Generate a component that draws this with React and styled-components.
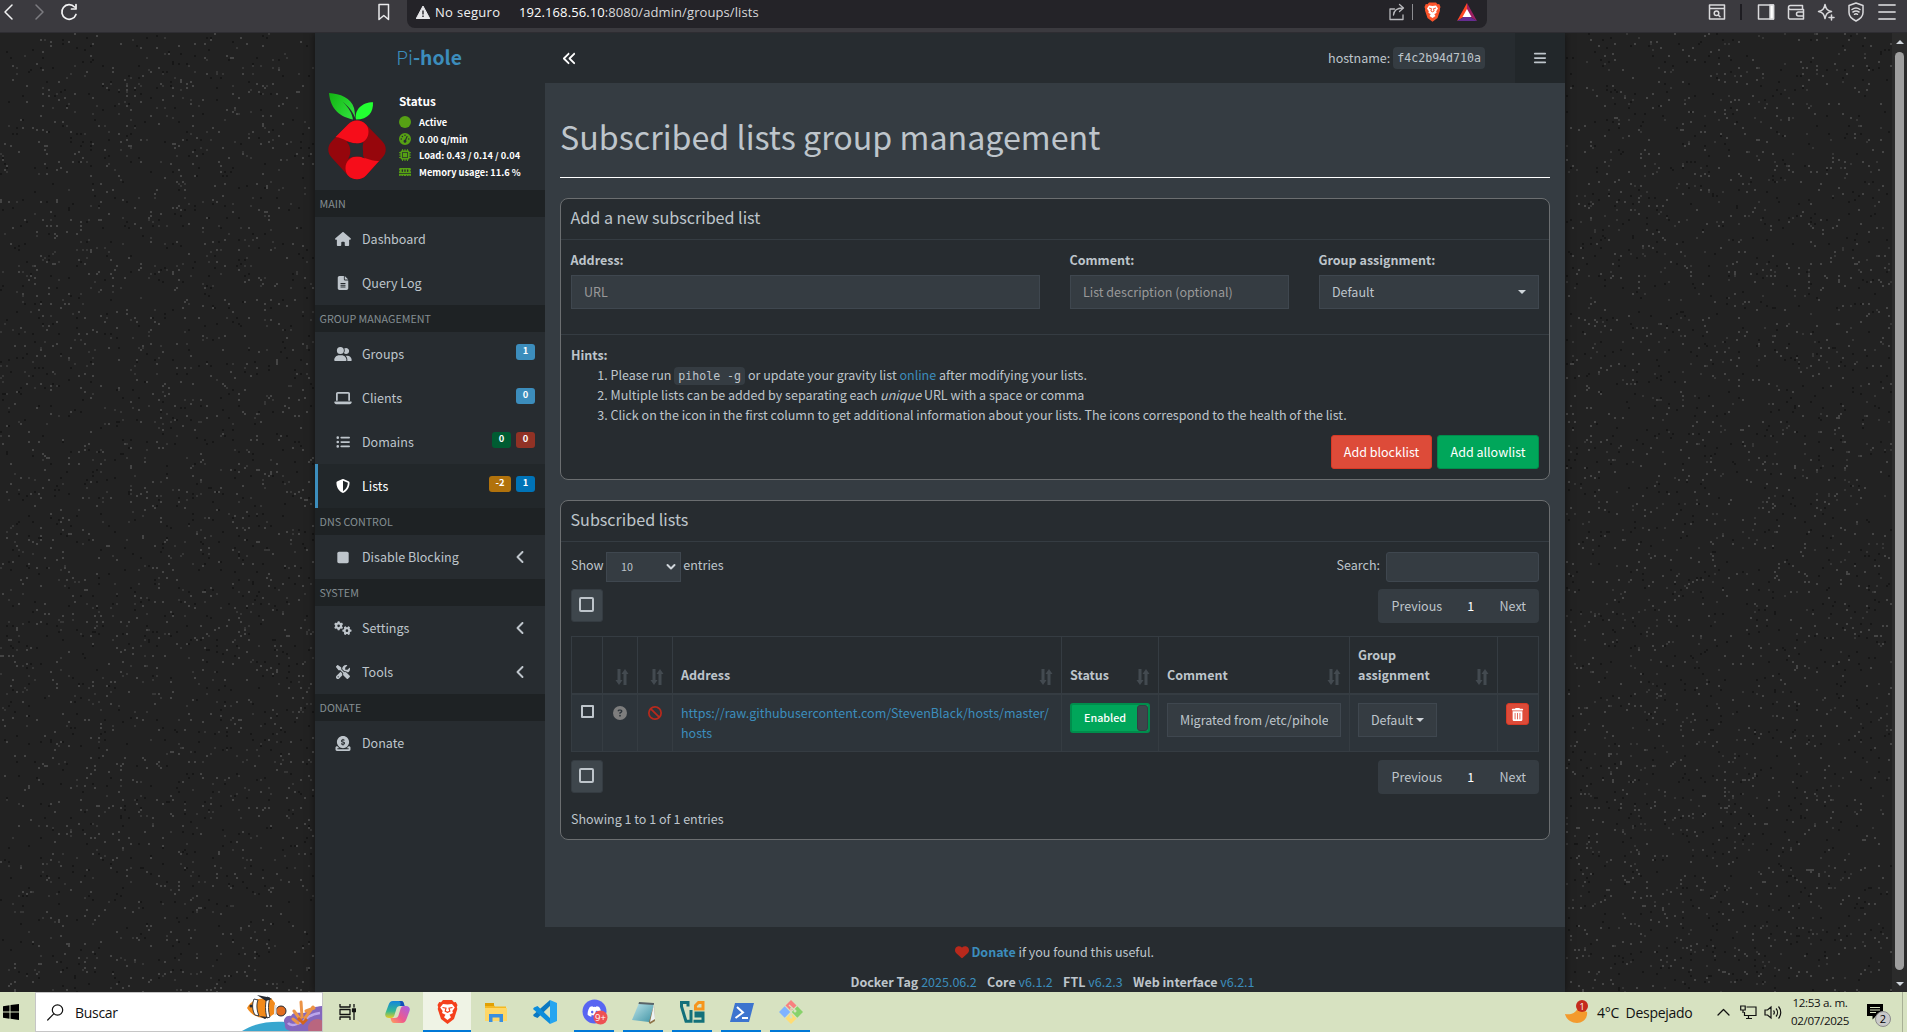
import React from 'react';
import styled, { createGlobalStyle } from 'styled-components';
import {
  FaHouse, FaFileLines, FaUserGroup, FaLaptop, FaListUl, FaShieldHalved, FaSquare, FaGears,
  FaScrewdriverWrench, FaCircleDollarToSlot, FaGaugeHigh, FaMicrochip, FaMemory, FaCircle,
  FaAnglesLeft, FaBars, FaAngleLeft, FaHeart, FaCircleQuestion, FaBan, FaTrashCan, FaDiscord,
} from 'react-icons/fa6';

const K = 0.895;
const fs = (n) => `${(n * K).toFixed(2)}px`;
const UI = '"Noto Sans CJK SC", "Open Sans", sans-serif';
const WIN = '"Open Sans", "Noto Sans", sans-serif';
const MONO = '"DejaVu Sans Mono", monospace';

const Global = createGlobalStyle`
  * { box-sizing: border-box; }
  html, body { margin: 0; padding: 0; background: #222; overflow: hidden; }
  input, select, button { font-family: inherit; outline: none; }
  svg { display: block; flex: none; }
`;

const Screen = styled.div`
  width: 1907px;
  height: 1032px;
  display: flex;
  flex-direction: column;
  overflow: hidden;
`;

/* ---------- browser bar ---------- */
const Chrome = styled.div`
  height: 33px;
  flex: none;
  display: flex;
  background: #3b3a3f;
  border-bottom: 1px solid #2e2d32;
  color: #e4e4e6;
`;
const ChromeGroup = styled.div`
  display: flex;
  align-items: center;
  height: 24px;
  gap: ${(p) => p.$gap || 0}px;
  padding-left: ${(p) => p.$pl || 0}px;
  width: ${(p) => (p.$w ? `${p.$w}px` : 'auto')};
`;
const UrlBar = styled.div`
  width: 1080px;
  height: 28px;
  background: #242328;
  border-radius: 0 0 8px 8px;
  display: flex;
  align-items: center;
  padding: 0 10px 4px 9px;
  font: 13px/20px ${WIN};
  color: #d8d8da;
`;
const Insecure = styled.span`
  width: 84px;
  margin-left: 5px;
  padding-bottom: 1px;
  letter-spacing: 0.3px;
  white-space: nowrap;
  color: #f1f1f2;
`;
const UrlText = styled.span`
  flex: 1;
  padding-bottom: 1px;
  letter-spacing: 0.09px;
  b { font-weight: 400; color: #fff; }
`;
const Bar = styled.i`
  width: ${(p) => p.$w || 1}px;
  height: 16px;
  margin: 0 ${(p) => p.$m || 0}px;
  background: ${(p) => p.$c};
`;

/* ---------- page ---------- */
const Page = styled.div`
  flex: none;
  height: 959px;
  position: relative;
  display: flex;
  background: #222;
  overflow: hidden;
  font: ${fs(14)}/20px ${UI};
  color: #bec5cb;
`;
const Speckle = styled.svg`
  position: absolute;
  left: 0;
  top: 0;
`;
const Wrapper = styled.div`
  width: 1250px;
  margin-left: 315px;
  position: relative;
  display: flex;
  background: #272c30;
  box-shadow: 0 0 8px rgba(0, 0, 0, 0.5);
`;
const Scroll = styled.div`
  position: relative;
  margin-left: auto;
  width: 15px;
  background: #2b2b2b;
  display: flex;
  flex-direction: column;
  align-items: center;
  padding: 7px 0 6px;
  justify-content: space-between;
`;
const Thumb = styled.div`
  width: 9px;
  height: 918px;
  margin-bottom: 4px;
  border-radius: 5px;
  background: #9f9f9f;
`;

const Side = styled.aside`
  width: 230px;
  flex: none;
  background: #272c30;
`;
const Brand = styled.div`
  height: 50px;
  text-align: center;
  font-size: ${fs(21.6)};
  line-height: 49px;
  padding-right: 2px;
  color: #3c8dbc;
  font-weight: 300;
  b { font-weight: 700; }
`;
const UserPanel = styled.div`
  height: 107px;
  display: flex;
  padding: 10px 0 0 13px;
`;
const Stats = styled.div`
  padding-left: 12px;
  color: #fff;
`;
const StatTitle = styled.div`
  font-weight: 700;
  font-size: ${fs(13.2)};
  line-height: 15px;
  margin-bottom: 6px;
`;
const Stat = styled.div`
  height: 16.5px;
  display: flex;
  align-items: center;
  gap: 8px;
  font-size: ${fs(10.35)};
  font-weight: 600;
  white-space: nowrap;
  svg { width: 12px; height: 12px; color: #56a014; }
`;
const Section = styled.div`
  height: 27px;
  padding-left: 4.5px;
  background: #1e2224;
  color: #848e92;
  font-size: ${fs(12)};
  line-height: 27.5px;
`;
const Item = styled.div`
  height: 44px;
  display: flex;
  align-items: center;
  padding: 0 10px 0 ${(p) => (p.$active ? 14.5 : 17.5)}px;
  border-left: ${(p) => (p.$active ? '3px solid #3c8dbc' : '0')};
  background: ${(p) => (p.$active ? '#22272a' : 'transparent')};
  color: ${(p) => (p.$active ? '#fff' : '#bec5cb')};
`;
const ItemIcon = styled.span`
  width: 20px;
  margin-right: 9.5px;
  display: flex;
  justify-content: center;
  svg { height: ${(p) => p.$s || 14}px; width: 20px; }
`;
const ItemLabel = styled.span`
  flex: 1;
  padding-bottom: 1px;
`;
const Badges = styled.span`
  display: flex;
  gap: 5px;
  margin-top: -4px;
`;
const Badge = styled.span`
  height: 16px;
  min-width: 19px;
  padding: 0 6.4px;
  border-radius: 3px;
  background: ${(p) => p.$c};
  color: #fff;
  font-weight: 700;
  font-size: ${fs(10.5)};
  line-height: 13px;
  text-align: center;
`;
const Chev = styled.span`
  margin-right: 9px;
  padding-bottom: 1px;
  svg { width: 11px; height: 16px; }
`;

/* ---------- main ---------- */
const Main = styled.div`
  flex: 1;
  display: flex;
  flex-direction: column;
  min-width: 0;
`;
const Nav = styled.header`
  height: 50px;
  flex: none;
  display: flex;
  align-items: center;
  padding-left: 17px;
`;
const Host = styled.div`
  margin-left: auto;
  margin-right: 30px;
  display: flex;
  align-items: center;
  gap: 3px;
`;
const Code = styled.code`
  font: ${(p) => p.$s || 11.6}px/${(p) => p.$lh || 18}px ${MONO};
  background: #353c42;
  border-radius: 4px;
  padding: 2px 4px;
  color: #bec5cb;
`;
const MenuBtn = styled.div`
  width: 50px;
  height: 50px;
  background: #22272a;
  display: flex;
  align-items: center;
  justify-content: center;
  padding-bottom: 1px;
`;
const Content = styled.main`
  height: 844px;
  flex: none;
  background: #353c42;
  padding: 30px 15px 0;
`;
const Title = styled.h1`
  margin: 0 0 20px;
  height: 65px;
  border-bottom: 1px solid #fff;
  font-weight: 400;
  font-size: ${fs(36)};
  line-height: 47px;
`;
const Box = styled.section`
  height: ${(p) => p.$h}px;
  margin-bottom: 20px;
  border: 1px solid #6b6e70;
  border-radius: 8px;
  background: #272c30;
`;
const BoxHead = styled.div`
  height: 41px;
  padding: 10px 9.5px;
  border-bottom: 1px solid #353c42;
  font-size: ${fs(18)};
  line-height: 17px;
`;
const FormRow = styled.div`
  height: 95px;
  border-bottom: 1px solid #353c42;
  padding: 10px 10px 0;
  display: grid;
  grid-template-columns: 469px 219px 220px;
  column-gap: 30px;
`;
const Label = styled.div`
  font-weight: 700;
  line-height: 20px;
  margin: 0 0 5px -0.5px;
`;
const Input = styled.input`
  display: block;
  width: ${(p) => p.$w || '100%'};
  height: ${(p) => p.$h || 34}px;
  padding: 0 12px 2px;
  border: 1px solid #3f474f;
  border-radius: ${(p) => p.$r || 0}px;
  background: #353c42;
  color: #bec5cb;
  font-size: ${fs(14)};
  &::placeholder { color: #999; }
`;
const Picker = styled.div`
  width: ${(p) => p.$w || '100%'};
  height: 34px;
  border: 1px solid #3f474f;
  background: #353c42;
  padding: 0 12px;
  display: flex;
  align-items: center;
  justify-content: space-between;
`;
const Caret = styled.i`
  border: 4px solid transparent;
  border-top-color: #d0d6db;
  border-bottom: 0;
`;
const Hints = styled.div`
  padding: 10px;
  height: 144px;
  display: flex;
  flex-direction: column;
`;
const HintList = styled.ol`
  margin: 0;
  padding-left: 39.5px;
  em { font-style: italic; }
`;
const Link = styled.a`
  color: #3c8dbc;
  font-weight: ${(p) => (p.$bold ? 700 : 400)};
`;
const Actions = styled.div`
  margin-top: auto;
  display: flex;
  justify-content: flex-end;
  gap: 5px;
`;
const Btn = styled.button`
  width: ${(p) => p.$w}px;
  height: 34px;
  padding: 0 0 2px;
  border: 1px solid ${(p) => p.$b};
  border-radius: 3px;
  background: ${(p) => p.$c};
  color: #fff;
  font-size: ${fs(14)};
  white-space: nowrap;
`;
const ListBody = styled.div`
  padding: 10px;
`;
const Tools = styled.div`
  height: 30px;
  display: flex;
  justify-content: space-between;
  margin-bottom: 7px;
`;
const Inline = styled.div`
  display: flex;
  gap: ${(p) => p.$gap}px;
  line-height: 26px;
`;
const Length = styled.div`
  width: 75px;
  height: 30px;
  border: 1px solid #3f474f;
  background: #353c42;
  display: flex;
  align-items: center;
  justify-content: space-between;
  padding: 0 4px 0 14px;
  font-size: ${fs(12)};
`;
const CheckBtn = styled.div`
  width: 32px;
  height: 33px;
  border-radius: 3px;
  border: 1px solid #353c42;
  background: #3e464c;
  display: flex;
  align-items: center;
  justify-content: center;
  padding: 0 1px 2px 0;
`;
const Square = styled.i`
  width: ${(p) => p.$s}px;
  height: ${(p) => p.$s}px;
  border: 2px solid #bec5cb;
  border-radius: ${(p) => p.$r || 0}px;
`;
const Pager = styled.div`
  width: 161px;
  height: 34px;
  border-radius: 4px;
  background: #353c42;
  display: flex;
  align-items: center;
  justify-content: space-between;
  padding: 0 13px 0 13.5px;
  b { font-weight: 400; color: #fff; }
`;
const Between = styled.div`
  display: flex;
  justify-content: space-between;
  margin-bottom: ${(p) => p.$mb}px;
`;
const Table = styled.div`
  display: grid;
  grid-template-columns: 31px 35px 35px 389px 97px 191px 148px 40px;
  border: 1px solid #353c42;
  width: 968px;
  margin-bottom: 8px;
`;
const Th = styled.div`
  height: 58px;
  padding: 8px;
  border-right: ${(p) => (p.$last ? 0 : 1)}px solid #353c42;
  border-bottom: 2px solid #353c42;
  display: flex;
  align-items: flex-end;
  justify-content: space-between;
  font-weight: 700;
  span { width: min-content; }
`;
const Td = styled.div`
  height: 56px;
  padding: ${(p) => p.$p || '8px'};
  border-right: ${(p) => (p.$last ? 0 : 1)}px solid #353c42;
  background: #2d343a;
  display: flex;
  align-items: flex-start;
  justify-content: ${(p) => p.$j || 'flex-start'};
`;
const Url = styled(Link)`
  width: 372px;
`;
const Toggle = styled.div`
  width: 80px;
  height: 30px;
  border: 2px solid #008d4c;
  border-radius: 3px;
  background: #00a65a;
  color: #fff;
  display: flex;
  justify-content: space-between;
  font-size: ${fs(12)};
  line-height: 26px;
  font-weight: 500;
  padding-left: 12px;
`;
const Knob = styled.i`
  width: 11px;
  border: 1px solid #353c42;
  border-radius: 3px;
  background: #3e464c;
`;
const Trash = styled.div`
  width: 23px;
  height: 22px;
  border: 1px solid #d73925;
  border-radius: 3px;
  background: #dd4b39;
  display: flex;
  align-items: center;
  justify-content: center;
`;
const Footer = styled.footer`
  padding-top: 15px;
  text-align: center;
`;
const FootLine = styled.div`
  display: flex;
  justify-content: center;
  align-items: center;
  gap: ${(p) => p.$gap}px;
  height: 20px;
  margin-bottom: 10px;
  padding-right: ${(p) => p.$pr || 0}px;
  white-space: pre;
  b { font-weight: 700; }
`;

/* ---------- taskbar ---------- */
const Taskbar = styled.div`
  height: 40px;
  flex: none;
  background: #d7e2c1;
  display: flex;
  font-family: ${WIN};
  color: #111;
`;
const TaskBtn = styled.div`
  width: ${(p) => p.$w || 49}px;
  display: flex;
  align-items: center;
  justify-content: center;
  position: relative;
  &::after {
    content: '';
    display: ${(p) => (p.$open ? 'block' : 'none')};
    position: absolute;
    left: 4px;
    right: 5px;
    bottom: 0;
    height: 2px;
    background: #0078d7;
  }
`;
const ActiveTask = styled(TaskBtn)`
  background: #eff3e5;
  &::after { display: block; left: 0; right: 0; }
`;
const SearchBox = styled.div`
  width: 288px;
  height: 40px;
  background: #fff;
  border: 1px solid #c6c6c6;
  display: flex;
  align-items: center;
  padding-left: 11px;
  font-size: 14px;
  letter-spacing: -0.3px;
  span { flex: 1; margin-left: 11px; }
`;
const Tray = styled.div`
  margin-left: auto;
  display: flex;
  align-items: center;
  font-size: 14px;
`;
const Weather = styled.div`
  width: 120px;
  margin-left: 8px;
  white-space: pre;
  letter-spacing: -0.3px;
`;
const Clock = styled.div`
  width: 76px;
  text-align: center;
  font-size: 11.6px;
  line-height: 18px;
  letter-spacing: -0.35px;
`;
const ShowDesk = styled.i`
  width: 5px;
  height: 40px;
  border-left: 1px solid #a8b096;
`;

/* deterministic speckles for the page backdrop */
function speckles(seed, count) {
  let s = seed;
  const rnd = () => {
    s = (s * 1664525 + 1013904223) >>> 0;
    return s / 4294967296;
  };
  let d = '';
  for (let i = 0; i < count; i++) {
    const x = Math.floor(rnd() * 946) * 2;
    const y = Math.floor(rnd() * 480) * 2;
    if (x > 312 && x < 1566) continue;
    d += `M${x} ${y}h2v2h-2z`;
  }
  return d;
}
const LIGHT = speckles(7, 7500);
const MID = speckles(91, 4500);
const DARK = speckles(333, 6000);

const Backdrop = () => (
  <Speckle width="1892" height="959" shapeRendering="crispEdges">
    <path d={DARK} fill="#171717" />
    <path d={MID} fill="#363636" />
    <path d={LIGHT} fill="#454545" />
  </Speckle>
);

const PiLogo = () => (
  <svg width="59" height="88" viewBox="0 0 59 88">
    <defs>
      <linearGradient id="leafA" x1="0" y1="0" x2="1" y2="0.6">
        <stop offset="0" stopColor="#12b212" />
        <stop offset="1" stopColor="#2fe03a" />
      </linearGradient>
    </defs>
    <path d="M1 0C12 .5 23 5 26 15c1 4 .8 8 1.500 11-1.500-5-5-11-13-17.500 7 7 9.500 12 10.500 18C13 24 2.500 17 1 0Z" fill="url(#leafA)" />
    <path d="M28 26.500C26 17 34 9.200 45 9.200 45.500 19 40.500 26.300 28 26.500Z" fill="#22ff31" />
    <path d="M29 27.500c3.500 0 6.500 1.500 9 4L54 48c5 5 5 12 0 17L38 82.500c-5 5-13 5-18 0L4 65c-5-5-5-12 0-17l16-16.500c2.500-2.500 5.500-4 9-4Z" fill="#96060c" />
    <path d="M29 27.500c3.500 0 6.500 1.500 9 4 2 2 2.500 5 2.500 7.500C40.500 46 35 50.500 29 50.500c-8 0-13-5.500-21.500-6.500L20 31.500c2.500-2.500 5.500-4 9-4Z" fill="#f60d1a" />
    <path d="M29 86.300c-3.500 0-6.500-1.300-9-3.800-2-2.500-2.500-5-2.500-7.500C17.500 68 23 63.500 29 63.500c8 0 13 5 22 4.500L38 82.500c-2.500 2.500-5.500 3.800-9 3.800Z" fill="#f60d1a" />
    <path d="M26 50.300c3.500.4 7 .1 9.500-1.300-1 3-.8 5.500-.5 8.500.2 3.500-.5 6 2 8-3-1.700-6-2.300-9-2-3.500 0-6 1-8 2.500 2-3 2.500-6 2.300-9-.3-3-1.300-6-3.800-8.500Z" fill="#272c30" />
  </svg>
);

const SortIcon = () => (
  <svg width="14" height="16" viewBox="0 0 14 16" fill="#434a50">
    <path d="M2.500 0h3v11H7.500L4 16 .5 11h2zM8.500 16h3V5h2L10 0 6.500 5h2z" />
  </svg>
);

const Ico = ({ w = 18, h = w, vb = '0 0 18 18', sw = 1.5, c = '#d9d9dc', children }) => (
  <svg width={w} height={h} viewBox={vb} fill="none" stroke={c} strokeWidth={sw} strokeLinecap="round" strokeLinejoin="round">
    {children}
  </svg>
);

const BatTriangle = styled.svg`
  margin-left: 5px;
`;

function BrowserBar() {
  return (
    <Chrome>
      <ChromeGroup $w={407}>
        <ChromeGroup $pl={2} $gap={15} $w={376}>
          <Ico w={14} h={18} vb="0 0 14 18" c="#f2f2f3"><path d="M10 2 3 9l7 7" /></Ico>
          <Ico w={14} h={18} vb="0 0 14 18" c="#7c7b80"><path d="m5 2 7 7-7 7" /></Ico>
          <Ico w={18} c="#f2f2f3" sw={1.7}><path d="M14.500 4A7.300 7.300 0 1 0 16 11.500M16 1.500V6h-4.500" /></Ico>
        </ChromeGroup>
        <Ico w={16} h={18} vb="0 0 16 18" c="#e9e9eb"><path d="M3 1.500h9.500v15L7.800 12.500 3 16.500z" /></Ico>
      </ChromeGroup>
      <UrlBar>
        <svg width="14" height="13" viewBox="0 0 14 13"><path d="M7 0 14 13H0z" fill="#e6e6e8" stroke="#e6e6e8" strokeLinejoin="round" /><path d="M6.300 4.500h1.400v4H6.300zM6.300 9.500h1.400V11H6.300z" fill="#242328" /></svg>
        <Insecure>No seguro</Insecure>
        <UrlText><b>192.168.56.10</b>:8080/admin/groups/lists</UrlText>
        <Ico w={18} c="#b9b9bd" sw={1.3}><path d="M6.500 6H2v10.500h13V12M5.500 12c.5-5 4-7 9-7M11.500 1.500 15.500 5l-4 3.500" /></Ico>
        <ChromeGroup $pl={6} $gap={11}>
          <Bar $c="#8d8d91" />
          <svg width="17" height="20" viewBox="0 0 17 20">
            <path d="M5 .5h7l1.500 1.700 1.700-.2 1.300 3-.7 2L16 8.500l-2.500 7.500-5 3.800-5-3.800L1 8.500 1.200 7l-.7-2 1.300-3 1.700.2z" fill="#fb542b" />
            <path d="m8.500 4 3.500-.5 2 3-1.800 2.800.4 1.500-2.300 1.500 1.200 1.700-3 2-3-2 1.200-1.700-2.300-1.500.4-1.500L3 6.500l2-3z" fill="#fff" />
            <path d="m5 6 2.500.7-.6 2.300 1.600.8 1.600-.8-.6-2.300L12 6" stroke="#fb542b" fill="none" />
          </svg>
          <BatTriangle width="20" height="18" viewBox="0 0 20 18">
            <path d="M10 0 0 18l10-6z" fill="#ff4724" /><path d="M10 0v12l10 6z" fill="#9e1f63" /><path d="m0 18 10-6 10 6z" fill="#662d91" /><path d="m10 6 4.500 8h-9z" fill="#fff" />
          </BatTriangle>
        </ChromeGroup>
      </UrlBar>
      <ChromeGroup $pl={221} $gap={12.3}>
        <Ico><path d="M1.500 2h15v14h-15zM1.500 5.500h15" /><circle cx="8.500" cy="10.300" r="2.300" /><path d="m10.500 12.300 1.500 1.500" /></Ico>
        <Bar $c="#1e1d22" $w={2} $m={2} />
        <Ico><path d="M1.500 2h15v14h-15z" /><path d="M13 2h3.500v14H13z" fill="#fff" /></Ico>
        <Ico><path d="M15.500 6V2.500h-12a2 2 0 0 0 0 4h13V16h-14l-1-1V4.500M16.500 9h-5a2 2 0 0 0 0 4h5z" /></Ico>
        <Ico><path d="M8 1.500c1 4.500 2 6 6.500 7-4.500 1-5.500 2.500-6.500 7-1-4.500-2-6-6.500-7 4.500-1 5.500-2.500 6.500-7ZM14.500 12v5M12 14.500h5" /></Ico>
        <Ico w={18} h={20} vb="0 0 18 20"><path d="m9 1 7 2.500v7c0 4-3 6.500-7 8.500-4-2-7-4.500-7-8.500v-7zM5 7.500c2.500-2 5.500-2 8 0M6 10c2-1.300 4-1.300 6 0M7.500 12.300c1-.6 2-.6 3 0" /></Ico>
        <Ico sw={1.8} c="#b9b9bc"><path d="M1 2h16M1 9h16M1 16h16" /></Ico>
      </ChromeGroup>
    </Chrome>
  );
}

const MENU = [
  { section: 'MAIN' },
  { label: 'Dashboard', icon: FaHouse },
  { label: 'Query Log', icon: FaFileLines },
  { section: 'GROUP MANAGEMENT' },
  { label: 'Groups', icon: FaUserGroup, badges: [['1', '#3c8dbc']] },
  { label: 'Clients', icon: FaLaptop, badges: [['0', '#3c8dbc']] },
  { label: 'Domains', icon: FaListUl, badges: [['0', '#005c32'], ['0', '#913225']] },
  { label: 'Lists', icon: FaShieldHalved, active: true, badges: [['-2', '#b1720c'], ['1', '#0073b7']] },
  { section: 'DNS CONTROL' },
  { label: 'Disable Blocking', icon: FaSquare, size: 13, more: true },
  { section: 'SYSTEM' },
  { label: 'Settings', icon: FaGears, more: true },
  { label: 'Tools', icon: FaScrewdriverWrench, more: true },
  { section: 'DONATE' },
  { label: 'Donate', icon: FaCircleDollarToSlot, size: 15 },
];

const STATS = [
  [FaCircle, 'Active'],
  [FaGaugeHigh, '0.00 q/min'],
  [FaMicrochip, 'Load: 0.43 / 0.14 / 0.04'],
  [FaMemory, 'Memory usage: 11.6 %'],
];

function Sidebar() {
  return (
    <Side>
      <Brand>Pi<b>-hole</b></Brand>
      <UserPanel>
        <PiLogo />
        <Stats>
          <StatTitle>Status</StatTitle>
          {STATS.map(([I, t]) => <Stat key={t}><I />{t}</Stat>)}
        </Stats>
      </UserPanel>
      {MENU.map((m) => m.section ? <Section key={m.section}>{m.section}</Section> : (
        <Item key={m.label} $active={m.active}>
          <ItemIcon $s={m.size}><m.icon /></ItemIcon>
          <ItemLabel>{m.label}</ItemLabel>
          {m.badges && <Badges>{m.badges.map(([t, c], i) => <Badge key={i} $c={c}>{t}</Badge>)}</Badges>}
          {m.more && <Chev><FaAngleLeft /></Chev>}
        </Item>
      ))}
    </Side>
  );
}

const Pages = () => <Pager><span>Previous</span><b>1</b><span>Next</span></Pager>;

const VERSIONS = [['Docker Tag', '2025.06.2'], ['Core', 'v6.1.2'], ['FTL', 'v6.2.3'], ['Web interface', 'v6.2.1']];

function AddBox() {
  return (
    <Box $h={282}>
      <BoxHead>Add a new subscribed list</BoxHead>
      <FormRow>
        <div><Label>Address:</Label><Input placeholder="URL" /></div>
        <div><Label>Comment:</Label><Input placeholder="List description (optional)" /></div>
        <div><Label>Group assignment:</Label><Picker>Default<Caret /></Picker></div>
      </FormRow>
      <Hints>
        <b>Hints:</b>
        <HintList>
          <li>Please run <Code $lh={15}>pihole -g</Code> or update your gravity list <Link>online</Link> after modifying your lists.</li>
          <li>Multiple lists can be added by separating each <em>unique</em> URL with a space or comma</li>
          <li>Click on the icon in the first column to get additional information about your lists. The icons correspond to the health of the list.</li>
        </HintList>
        <Actions>
          <Btn $w={101} $c="#dd4b39" $b="#d73925">Add blocklist</Btn>
          <Btn $w={102} $c="#00a65a" $b="#008d4c">Add allowlist</Btn>
        </Actions>
      </Hints>
    </Box>
  );
}

function ListBox() {
  return (
    <Box $h={340}>
      <BoxHead>Subscribed lists</BoxHead>
      <ListBody>
        <Tools>
          <Inline $gap={2.3}>
            Show
            <Length>10<Ico w={10} h={8} vb="0 0 10 8" sw={2} c="#d0d6db"><path d="m1.500 2 3.500 3.500L8.500 2" /></Ico></Length>
            entries
          </Inline>
          <Inline $gap={6}>Search:<Input $w="153px" $h={30} $r={3} aria-label="Search" /></Inline>
        </Tools>
        <Between $mb={13}><CheckBtn><Square $s={15} $r={2} /></CheckBtn><Pages /></Between>
        <Table>
          <Th />
          <Th><i /><SortIcon /></Th>
          <Th><i /><SortIcon /></Th>
          <Th>Address<SortIcon /></Th>
          <Th>Status<SortIcon /></Th>
          <Th>Comment<SortIcon /></Th>
          <Th><span>Group assignment</span><SortIcon /></Th>
          <Th $last />
          <Td $j="center" $p="10px 0 0"><Square $s={13} $r={1} /></Td>
          <Td $j="center" $p="11px 0 0"><FaCircleQuestion size={14} color="#7d7d7d" /></Td>
          <Td $j="center" $p="11px 0 0"><FaBan size={14} color="#b8291c" /></Td>
          <Td><Url>https://raw.githubusercontent.com/StevenBlack/hosts/master/<wbr />hosts</Url></Td>
          <Td><Toggle>Enabled<Knob /></Toggle></Td>
          <Td><Input $w="174px" defaultValue="Migrated from /etc/pihole" /></Td>
          <Td><Picker $w="79px">Default<Caret /></Picker></Td>
          <Td $last><Trash><FaTrashCan size={13} color="#fff" /></Trash></Td>
        </Table>
        <Between $mb={15}><CheckBtn><Square $s={15} $r={2} /></CheckBtn><Pages /></Between>
        <div>Showing 1 to 1 of 1 entries</div>
      </ListBody>
    </Box>
  );
}

function Icons() {
  return (
    <>
      <TaskBtn $w={49}>
        <Ico w={17} h={16} vb="0 0 17 16" c="#111" sw={1.3}><path d="M1 0v3h10V0M1 16v-3h10v3M1 5.500h10v5H1zM15 0v3M15 8v8" /><path d="M13.500 5h3v2.500h-3z" fill="#111" /></Ico>
      </TaskBtn>
      <TaskBtn $w={51}>
        <svg width="25" height="22" viewBox="0 0 25 22">
          <defs>
            <linearGradient id="cpA" x1="0" y1="0" x2="0" y2="1"><stop offset="0" stopColor="#1285dd" /><stop offset=".6" stopColor="#36b990" /><stop offset="1" stopColor="#e9cb24" /></linearGradient>
            <linearGradient id="cpB" x1="1" y1="0" x2="0" y2="1"><stop offset="0" stopColor="#a560e8" /><stop offset=".6" stopColor="#ef5a8c" /><stop offset="1" stopColor="#ffa35b" /></linearGradient>
          </defs>
          <path d="M8 0h8c2 0 2.500 1.500 3 3l.5 2H15c-2 0-3 1-3.500 2.500L9.500 14c-.5 2-1.500 3-3.500 3H4c-3 0-4.500-2-3.500-5L3.500 4C4.500 1.500 5.500 0 8 0Z" fill="url(#cpA)" />
          <path d="M17 22H9c-2 0-2.500-1.500-3-3l-.5-2H10c2 0 3-1 3.500-2.500L15.500 8c.5-2 1.500-3 3.500-3h2c3 0 4.500 2 3.500 5l-3 8c-1 2.500-2 4-4.500 4Z" fill="url(#cpB)" />
          <path d="M15 5h4.500L19 3c-.5-2-1-3-3-3h-2c2 1 2 3 1 5Z" fill="#154fb8" />
        </svg>
      </TaskBtn>
      <ActiveTask $w={48}>
        <svg width="21" height="24" viewBox="0 0 21 24">
          <path d="M6 0h9l2 2.300 1.800-.3L20.500 5l-.7 2 .5 2L17 19l-6.500 5L4 19 .7 9l.5-2-.7-2L2.200 2 4 2.300z" fill="#f5401c" />
          <path d="m10.500 4.500 4.500-.6 2.800 3.600-2.500 3.600.7 2-3.500 1.700 1.500 2.400-3.500 2.800L7 17.200l1.500-2.400L5 13.100l.7-2-2.500-3.600L6 3.900z" fill="#fff" />
          <path d="m5.500 7.500 3.500.7-.8 3 2.300 1.200 2.300-1.200-.8-3 3.500-.7" stroke="#f5401c" strokeWidth="1.200" fill="none" />
        </svg>
      </ActiveTask>
      <TaskBtn>
        <svg width="22" height="19" viewBox="0 0 22 19">
          <path d="M0 1h8l2 2.500h11V17H0z" fill="#f5b921" /><path d="M0 0h9v3H0z" fill="#e1a003" /><path d="M0 5h22v13H0z" fill="#ffd766" /><path d="M4 11h14v8h-3.500v-4.500h-7V19H4z" fill="#3b8ede" />
        </svg>
      </TaskBtn>
      <TaskBtn $w={50}>
        <svg width="24" height="24" viewBox="0 0 24 24">
          <path d="M17 0 24 3v18l-7 3z" fill="#25a5f0" /><path d="M17 0v6L4.500 18 1 16.500 0 15z" fill="#0a78c2" /><path d="M17 24v-6L4.500 6 1 7.500 0 9z" fill="#0d8ddb" />
        </svg>
      </TaskBtn>
      <TaskBtn $open>
        <svg width="26" height="26" viewBox="0 0 26 26">
          <circle cx="12.500" cy="12.500" r="12" fill="#5865f2" />
          <g transform="translate(5 5)"><FaDiscord size={15} color="#fff" /></g>
          <circle cx="18.500" cy="18.500" r="7" fill="#ee5153" />
          <text x="18.500" y="22" fontSize="9.500" fontFamily="Open Sans, sans-serif" fill="#fff" textAnchor="middle">9+</text>
        </svg>
      </TaskBtn>
      <TaskBtn $open>
        <svg width="24" height="23" viewBox="0 0 24 23">
          <defs><linearGradient id="np" x1="0" y1="0" x2="1" y2="1"><stop offset="0" stopColor="#bfe6ea" /><stop offset="1" stopColor="#3f93a5" /></linearGradient></defs>
          <path d="M22 4 23 20l-5 3-2-3z" fill="#8d7347" /><path d="M7 2 22 3 17 21 0 19z" fill="url(#np)" /><path d="M7 1 22 2v2L6.500 3z" fill="#596468" /><path d="m22 3 1 15-5 3z" fill="#eef2f2" />
        </svg>
      </TaskBtn>
      <TaskBtn $open>
        <svg width="25" height="22" viewBox="0 0 25 22" fill="none" strokeWidth="3">
          <path d="M8 5.500V1.500H1.500v4L6 20.300h5V9" stroke="#13707a" />
          <path d="M24.500 12H16v3h7v5.300h-9.500" stroke="#13707a" />
          <path d="M15.500 8V4.500l3-3H23V8z" stroke="#f6961e" />
        </svg>
      </TaskBtn>
      <TaskBtn $open>
        <svg width="24" height="19" viewBox="0 0 24 19">
          <path d="M5 0h19l-5 19H0z" fill="#3d74cf" /><path d="m7 4 6 5.500L5.500 15M12 15h6" stroke="#fff" strokeWidth="2" fill="none" />
        </svg>
      </TaskBtn>
      <TaskBtn $open>
        <svg width="24" height="24" viewBox="0 0 24 24">
          <path d="m12 0 5.500 5.500L12 11 6.500 5.500z" fill="#f88080" /><path d="m5.700 6.300 5.500 5.700-5.500 5.700L0 12z" fill="#80b3ff" /><path d="m18.300 6.300 5.700 5.700-5.700 5.700-5.500-5.700z" fill="#87d26b" /><path d="m12 13 5.500 5.500L12 24l-5.500-5.500z" fill="#ffdc73" /><path d="M10 5l6 5.500M12 8v9" stroke="#d7e2c1" strokeWidth="1.400" /><circle cx="12" cy="17" r="1.500" fill="#d7e2c1" /><circle cx="16" cy="11" r="1.500" fill="#d7e2c1" />
        </svg>
      </TaskBtn>
    </>
  );
}

const ReefArt = () => (
  <svg width="80" height="38" viewBox="0 0 80 38">
    <path d="M0 38C12 30 28 28 44 29l10 9z" fill="#38a6cf" />
    <path d="M5 15C9 7 18 4 26 6l3-1 4 5-1 11-6 4C17 26 9 22 5 15Z" fill="#f28a1b" />
    <path d="m12 6 4 1c-2 5-1 11 1 16l-4-1c-3-5-3-11-1-16ZM25 4l3 1c-2 6-2 13 0 19l-3 1c-2-7-2-14 0-21Z" fill="#fff" stroke="#252a33" strokeWidth=".9" />
    <path d="m15 2 10 2 5 2-6 2zM17 23l9 1-3 2z" fill="#252a33" />
    <circle cx="9" cy="13" r="1.500" fill="#252a33" /><circle cx="39" cy="18" r="5" fill="#e36d1f" stroke="#252a33" />
    <path d="M33.500 12v10" stroke="#ddd" strokeWidth="2" />
    <path d="M43 31c-3-4 1-9 6-8 3-6 12-1 15-4 4-5 9-5 16-6v25H50c-5 0-8-3-7-7Z" fill="#8467bd" />
    <path d="M46 30c3 4 10 1 14-1s6-8 18-9" stroke="#bba5ea" strokeWidth="2.500" fill="none" />
    <g stroke="#ec9446" strokeWidth="3" strokeLinecap="round" fill="none"><path d="m58 26-6-8M60 24 59 9M63 25l8-11M56 30l-5-4M64 18l8-3" /></g>
    <path d="m56 25 5 5 4-4" stroke="#d2641c" strokeWidth="3" fill="none" />
    <circle cx="75" cy="35" r="9" fill="#b9667f" />
  </svg>
);

const StartLogo = styled.svg`
  margin-right: 13px;
`;
const Spaced = styled.svg`
  margin: ${(p) => p.$m};
`;

function WindowsBar() {
  return (
    <Taskbar>
      <TaskBtn $w={35}>
        <StartLogo width="16" height="16" viewBox="0 0 16 16"><path d="M0 2.200 6.500 1.300v6.200H0zM7.500 1.100 16 0v7.500H7.500zM0 8.500h6.500v6.200L0 13.800zM7.500 8.500H16V16l-8.500-1.200z" fill="#000" /></StartLogo>
      </TaskBtn>
      <SearchBox>
        <Ico w={17} vb="0 0 17 17" c="#111" sw={1.2}><circle cx="10.500" cy="6" r="5.200" /><path d="m6.700 9.800-6 6.200" /></Ico>
        <span>Buscar</span>
        <ReefArt />
      </SearchBox>
      <Icons />
      <Tray>
        <svg width="24" height="24" viewBox="0 0 24 24">
          <path d="M0 14c5 1 10 0 13-6l9 4c1 6-4 11-10 11C6 23 1 19 0 14Z" fill="#f39a2d" /><circle cx="17" cy="6" r="6" fill="#c42b1c" />
          <text x="17" y="9.500" fontSize="9" fontFamily="Open Sans, sans-serif" fill="#fff" textAnchor="middle">1</text>
        </svg>
        <Weather>{'4°C  Despejado'}</Weather>
        <Ico w={13} h={8} vb="0 0 13 8" c="#111" sw={1.3}><path d="M1 7 6.500 1.500 12 7" /></Ico>
        <Spaced $m="0 0 0 10px" width="17" height="15" viewBox="0 0 17 15" fill="none" stroke="#111" strokeWidth="1.200"><path d="M6.500 2H16v8.500H4.500V7M8.500 10.500v3M6 13.500h6M.7 1h4.500v4H.7zM3 5v3" /></Spaced>
        <Spaced $m="0 0 0 7px" width="18" height="15" viewBox="0 0 18 15" fill="none" stroke="#111" strokeWidth="1.200"><path d="M1 5h2.500L7 2v11L3.500 10H1zM9.500 5.500c1 1.200 1 2.800 0 4M12 3.500c2 2.300 2 5.700 0 8M14.500 1.500c3 3.500 3 8.500 0 12" /></Spaced>
        <Clock>12:53 a. m.<br />02/07/2025</Clock>
        <Spaced $m="6px 10px 0 8px" width="26" height="28" viewBox="0 0 26 28">
          <path d="M1 3h16v12H10l-3.500 3.500V15H1z" fill="#000" /><path d="M4 6.500h10M4 9h10M4 11.500h6" stroke="#d7e2c1" />
          <circle cx="17" cy="18" r="7.500" fill="#c9c9c9" stroke="#8b8b8b" />
          <text x="17" y="22" fontSize="11" fontFamily="Open Sans, sans-serif" fill="#000" textAnchor="middle">2</text>
        </Spaced>
        <ShowDesk />
      </Tray>
    </Taskbar>
  );
}

const UpCaret = styled(Caret)`
  transform: rotate(180deg);
`;

export default function App() {
  return (
    <Screen>
      <Global />
      <BrowserBar />
      <Page>
        <Backdrop />
        <Wrapper>
          <Sidebar />
          <Main>
            <Nav>
              <FaAnglesLeft size={15} color="#fff" />
              <Host>hostname: <Code>f4c2b94d710a</Code></Host>
              <MenuBtn><FaBars size={14} /></MenuBtn>
            </Nav>
            <Content>
              <Title>Subscribed lists group management</Title>
              <AddBox />
              <ListBox />
            </Content>
            <Footer>
              <FootLine $gap={2.5} $pr={1}><FaHeart size={14} color="#b8291c" /><span><Link $bold>Donate</Link> if you found this useful.</span></FootLine>
              <FootLine $gap={10.3} $pr={5}>{VERSIONS.map(([k, v]) => <span key={k}><b>{k}</b> <Link>{v}</Link></span>)}</FootLine>
            </Footer>
          </Main>
        </Wrapper>
        <Scroll>
          <UpCaret />
          <Thumb />
          <Caret />
        </Scroll>
      </Page>
      <WindowsBar />
    </Screen>
  );
}
